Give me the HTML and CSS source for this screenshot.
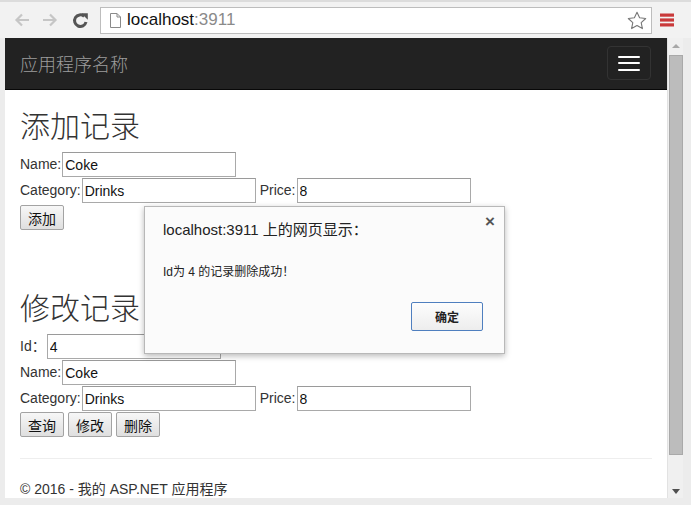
FILE: index.html
```html
<!DOCTYPE html>
<html lang="zh-CN">
<head>
<meta charset="utf-8">
<title>localhost:3911</title>
<link rel="stylesheet" href="styles.css">
</head>
<body>
<div class="window">
  <div class="toolbar">
    <span class="tb-btn">
      <svg width="16" height="14" viewBox="0 0 16 14"><path d="M15 7H2.5M8 1.5L2.5 7 8 12.5" stroke="#c6c6c6" stroke-width="2.2" fill="none"/></svg>
    </span>
    <span class="tb-btn">
      <svg width="16" height="14" viewBox="0 0 16 14"><path d="M1 7h12.5M8 1.5L13.5 7 8 12.5" stroke="#c6c6c6" stroke-width="2.2" fill="none"/></svg>
    </span>
    <span class="tb-btn reload">
      <svg width="17" height="17" viewBox="0 0 17 17"><path d="M14 10A5.8 5.8 0 1 1 12.2 4.3" stroke="#555" stroke-width="3" fill="none"/><path d="M9.2 1.2h6.6v6.6z" fill="#555"/></svg>
    </span>
    <div class="omnibox">
      <svg class="file-ic" width="11" height="15" viewBox="0 0 11 15"><path d="M0.5 0.5h6.5l3.5 3.5v10.5h-10z M7 0.5v3.5h3.5" stroke="#8a8a8a" stroke-width="1" fill="#fff"/></svg>
      <span class="host">localhost</span><span class="port">:3911</span>
      <svg class="star" width="20" height="19" viewBox="0 0 20 19"><path d="M10 1.2l2.6 5.6 6.1.7-4.5 4.1 1.2 6-5.4-3-5.4 3 1.2-6L1.3 7.5l6.1-.7z" stroke="#777" stroke-width="1.1" fill="none" stroke-linejoin="round"/></svg>
    </div>
    <span class="tb-btn menu">
      <svg width="14" height="14" viewBox="0 0 14 14"><rect x="0" y="0.5" width="14" height="3.2" fill="#c9393a"/><rect x="0" y="5.4" width="14" height="3.2" fill="#c9393a"/><rect x="0" y="10.3" width="14" height="3.2" fill="#c9393a"/></svg>
    </span>
  </div>

  <div class="frame">
    <div class="viewport">
      <nav class="navbar">
        <span class="brand">应用程序名称</span>
        <span class="toggle"><span class="bar"></span><span class="bar"></span><span class="bar"></span></span>
      </nav>
      <div class="container">
        <h2 class="title">添加记录</h2>
        <div class="row"><label class="lbl">Name:</label><input class="field" type="text" value="Coke"></div>
        <div class="row"><label class="lbl">Category:</label><input class="field" type="text" value="Drinks"><label class="lbl price">Price:</label><input class="field" type="text" value="8"></div>
        <div class="row btn-row first-btns"><button class="btn">添加</button></div>

        <h2 class="title second">修改记录</h2>
        <div class="row"><label class="lbl">Id：</label><input class="field" type="text" value="4"></div>
        <div class="row"><label class="lbl">Name:</label><input class="field" type="text" value="Coke"></div>
        <div class="row"><label class="lbl">Category:</label><input class="field" type="text" value="Drinks"><label class="lbl price">Price:</label><input class="field" type="text" value="8"></div>
        <div class="row btn-row"><button class="btn">查询</button><button class="btn">修改</button><button class="btn">删除</button></div>

        <hr class="sep">
        <footer class="footer">© 2016 - 我的 ASP.NET 应用程序</footer>
      </div>
    </div>
    <div class="scrollbar">
      <span class="arrow up"></span>
      <span class="thumb"></span>
      <span class="arrow down"></span>
    </div>
  </div>

  <div class="dialog">
    <span class="close">×</span>
    <div class="dlg-title">localhost:3911 上的网页显示：</div>
    <div class="dlg-msg">Id为 4 的记录删除成功！</div>
    <div class="dlg-actions"><button class="dlg-btn">确定</button></div>
  </div>
</div>
</body>
</html>
```

FILE: styles.css
```css
html, body {
  margin: 0;
  padding: 0;
  background: #e9e9e9;
}

.window {
  position: relative;
  width: 691px;
  height: 505px;
  overflow: hidden;
  background: #ececec;
  font-family: "Liberation Sans", "Noto Sans CJK SC", sans-serif;
}

/* ---------- browser toolbar ---------- */
.toolbar {
  height: 38px;
  box-sizing: border-box;
  display: flex;
  align-items: center;
  padding-left: 8px;
  background: #f2f2f2;
  border-top: 2px solid #dcdcdc;
}

.tb-btn {
  width: 28px;
  height: 24px;
  display: flex;
  align-items: center;
  justify-content: center;
}

.tb-btn.reload {
  margin-left: 2px;
}

.omnibox {
  margin-left: 6px;
  width: 552px;
  height: 27px;
  box-sizing: border-box;
  border: 1px solid #bdbdbd;
  background: #fff;
  display: flex;
  align-items: center;
  padding-left: 9px;
  font-size: 17px;
}

.file-ic {
  margin-right: 6px;
}

.host {
  color: #111;
}

.port {
  color: #8a8a8a;
}

.star {
  margin-left: auto;
  margin-right: 4px;
}

.menu {
  margin-left: 1px;
}

/* ---------- frame ---------- */
.frame {
  display: flex;
  height: 460px;
  padding-left: 5px;
}

.viewport {
  width: 662px;
  height: 460px;
  background: #fff;
  overflow: hidden;
  color: #333;
  font-size: 14px;
}

.scrollbar {
  width: 16px;
  height: 460px;
  box-sizing: border-box;
  background: #f0f0f0;
  border-left: 1px solid #e2e2e2;
  display: flex;
  flex-direction: column;
  align-items: center;
}

.arrow {
  width: 0;
  height: 0;
  border-left: 4px solid transparent;
  border-right: 4px solid transparent;
}

.arrow.up {
  margin-top: 6px;
  border-bottom: 4px solid #a8a8a8;
}

.arrow.down {
  margin-top: 34px;
  border-top: 5px solid #505050;
}

.thumb {
  margin-top: 7px;
  width: 14px;
  height: 400px;
  box-sizing: border-box;
  background: #bcbcbc;
  border: 1px solid #a9a9a9;
}

/* ---------- navbar ---------- */
.navbar {
  height: 52px;
  box-sizing: border-box;
  background: #222;
  border-bottom: 1px solid #080808;
  display: flex;
  align-items: center;
  justify-content: space-between;
  padding: 0 16px 0 15px;
}

.brand {
  font-family: "Noto Sans CJK SC", sans-serif;
  font-weight: 300;
  font-size: 18px;
  color: #9d9d9d;
  margin-top: -2px;
}

.toggle {
  width: 44px;
  height: 34px;
  box-sizing: border-box;
  border: 1px solid #333;
  border-radius: 4px;
  display: flex;
  flex-direction: column;
  align-items: center;
  justify-content: center;
  gap: 4.5px;
  margin-top: -1px;
}

.bar {
  width: 22px;
  height: 2px;
  border-radius: 1px;
  background: #fff;
}

/* ---------- content ---------- */
.container {
  padding: 0 15px;
}

.title {
  font-family: "Noto Sans CJK SC", sans-serif;
  font-weight: 300;
  font-size: 30px;
  line-height: 33px;
  margin: 18px 0 11px;
  color: #333;
}

.title.second {
  margin-top: 59px;
}

.row {
  display: flex;
  align-items: flex-start;
  height: 26px;
}

.lbl {
  line-height: 25px;
  margin-right: 1px;
  font-family: "Liberation Sans", "Noto Sans CJK SC", sans-serif;
}

.lbl.price {
  margin-left: 4px;
}

.field {
  width: 174px;
  height: 25px;
  box-sizing: border-box;
  margin: 0;
  padding: 0 2px;
  border: 1px solid #a9a9a9;
  border-top-color: #9a9a9a;
  font-family: "Liberation Sans", "Noto Sans CJK SC", sans-serif;
  font-size: 14px;
  color: #111;
  background: #fff;
}

.first-btns {
  padding-top: 1px;
}

.btn {
  height: 25px;
  width: 44px;
  box-sizing: border-box;
  margin: 0 4px 0 0;
  padding: 0;
  border: 1px solid #a3a3a3;
  border-radius: 2px;
  background: linear-gradient(#f7f7f7, #dfdfdf);
  font-family: "Noto Sans CJK SC", sans-serif;
  font-size: 14px;
  line-height: 22px;
  color: #111;
}

.sep {
  margin: 20px 0 0;
  border: 0;
  border-top: 1px solid #eee;
  height: 0;
}

.footer {
  margin-top: 20px;
  line-height: 20px;
  font-size: 14px;
  font-family: "Liberation Sans", "Noto Sans CJK SC", sans-serif;
}

/* ---------- alert dialog ---------- */
.dialog {
  position: absolute;
  left: 144px;
  top: 206px;
  width: 361px;
  height: 148px;
  box-sizing: border-box;
  background: #fbfbfb;
  border: 1px solid #b8b8b8;
  box-shadow: 0 2px 6px rgba(0, 0, 0, 0.28);
  padding: 13px 21px 0 18px;
  font-family: "Liberation Sans", "Noto Sans CJK SC", sans-serif;
  color: #222;
}

.close {
  position: absolute;
  top: 5px;
  right: 9px;
  font-size: 17px;
  font-weight: bold;
  color: #555;
}

.dlg-title {
  font-size: 15px;
  line-height: 20px;
}

.dlg-msg {
  margin-top: 24px;
  font-size: 12px;
  line-height: 16px;
}

.dlg-actions {
  display: flex;
  justify-content: flex-end;
  margin-top: 22px;
}

.dlg-btn {
  width: 72px;
  height: 29px;
  box-sizing: border-box;
  border: 1px solid #4f7fbf;
  border-radius: 2px;
  background: linear-gradient(#fdfdfd, #ededed);
  font-family: "Noto Sans CJK SC", sans-serif;
  font-size: 12px;
  font-weight: bold;
  color: #222;
}
```
